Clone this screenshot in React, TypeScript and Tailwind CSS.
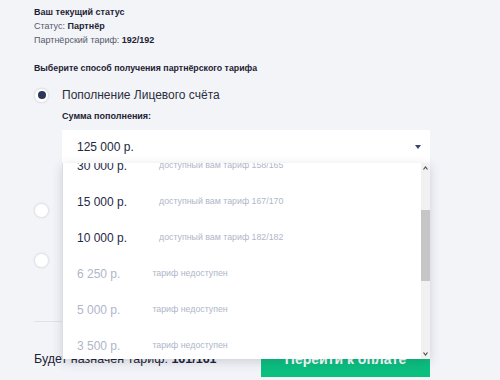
const options = [
  { sum: "30 000 р.", note: "доступный вам тариф 158/165", ok: true },
  { sum: "15 000 р.", note: "доступный вам тариф 167/170", ok: true },
  { sum: "10 000 р.", note: "доступный вам тариф 182/182", ok: true },
  { sum: "6 250 р.", note: "тариф недоступен", ok: false },
  { sum: "5 000 р.", note: "тариф недоступен", ok: false },
  { sum: "3 500 р.", note: "тариф недоступен", ok: false },
]

function Radio({ checked }: { checked?: boolean }) {
  return (
    <span className="flex h-[15px] w-[15px] shrink-0 items-center justify-center rounded-full border border-[#e1e4ec] bg-white shadow-[0_0_2px_rgba(40,50,90,0.12)]">
      {checked && <span className="h-[8px] w-[8px] rounded-full bg-[#2c3658]" />}
    </span>
  )
}

function Scrollbar() {
  return (
    <div className="flex w-[9px] shrink-0 flex-col bg-[#f1f1f1]">
      <div className="flex h-[10px] items-center justify-center">
        <svg width="5" height="4" viewBox="0 0 5 4">
          <path d="M0.5 3.5 L2.5 1 L4.5 3.5" fill="none" stroke="#505050" strokeWidth="1.2" />
        </svg>
      </div>
      <div className="flex-1">
        <div className="mt-[37px] h-[71px] bg-[#c6c6c6]" />
      </div>
      <div className="flex h-[10px] items-center justify-center">
        <svg width="5" height="4" viewBox="0 0 5 4">
          <path d="M0.5 0.5 L2.5 3 L4.5 0.5" fill="none" stroke="#505050" strokeWidth="1.2" />
        </svg>
      </div>
    </div>
  )
}

export default function App() {
  return (
    <div className="h-[380px] w-[500px] overflow-hidden bg-[#f3f4f8] font-['Liberation_Sans',Arial,sans-serif]">
      <div className="ml-[34px] w-[396px] pt-[5px]">
        <div className="text-[9px] leading-[14px] text-[#555a6b]">
          <p className="font-bold text-[#1e2235]">Ваш текущий статус</p>
          <p>
            Статус: <b className="text-[#1e2235]">Партнёр</b>
          </p>
          <p>
            Партнёрский тариф: <b className="text-[#1e2235]">192/192</b>
          </p>
          <p className="mt-[14px] text-[8.8px] font-bold text-[#1e2235]">Выберите способ получения партнёрского тарифа</p>
        </div>

        <div className="mt-[10px] flex h-[20px] items-center gap-[13px]">
          <Radio checked />
          <span className="text-[12px] text-[#2a2e3d]">Пополнение Лицевого счёта</span>
        </div>

        <div className="ml-[28px]">
          <p className="mt-[4px] text-[9px] font-bold leading-[14px] text-[#1e2235]">Сумма пополнения:</p>
          <div className="relative mt-[7px]">
            <div className="flex h-[34px] items-center justify-between border-b border-[#e6e8ee] bg-white pl-[15px] pr-[9px] text-[12px] text-[#22283a]">
              <span>125 000 р.</span>
              <span className="h-0 w-0 border-x-[3px] border-t-[4px] border-x-transparent border-t-[#3a4466]" />
            </div>

            <div className="absolute left-0 top-[33px] z-10 flex h-[196px] w-full overflow-hidden border-l border-[#dcdee5] bg-white shadow-[0_3px_10px_rgba(40,45,70,0.18)]">
              <div className="flex-1 overflow-hidden">
                <ul className="-mt-[15px]">
                  {options.map((o) => (
                    <li key={o.sum} className="flex h-[36px] items-center pl-[14px]">
                      <span className={o.ok ? "text-[12px] text-[#1f2a48]" : "text-[12px] text-[#b0b6c9]"}>{o.sum}</span>
                      <span className="ml-[32px] text-[8.8px] text-[#b0b6c9]">{o.note}</span>
                    </li>
                  ))}
                </ul>
              </div>
              <Scrollbar />
            </div>
          </div>
        </div>

        <div className="mt-[36px] flex h-[20px] items-center gap-[13px]">
          <Radio />
          <span className="text-[12px] text-[#2a2e3d]">Бонусные баллы</span>
        </div>
        <div className="mt-[30px] flex h-[20px] items-center gap-[13px]">
          <Radio />
          <span className="text-[12px] text-[#2a2e3d]">Оплата тарифа</span>
        </div>

        <div className="mt-[51px] border-t border-[#e0e2ea]" />

        <div className="mt-[19px] flex items-center justify-between">
          <span className="text-[12.5px] text-[#1e2235]">
            Будет назначен тариф: <b>161/161</b>
          </span>
          <button className="h-[36px] w-[169px] bg-[#0bbf7f] text-[14px] font-bold text-white">Перейти к оплате</button>
        </div>
      </div>
    </div>
  )
}
